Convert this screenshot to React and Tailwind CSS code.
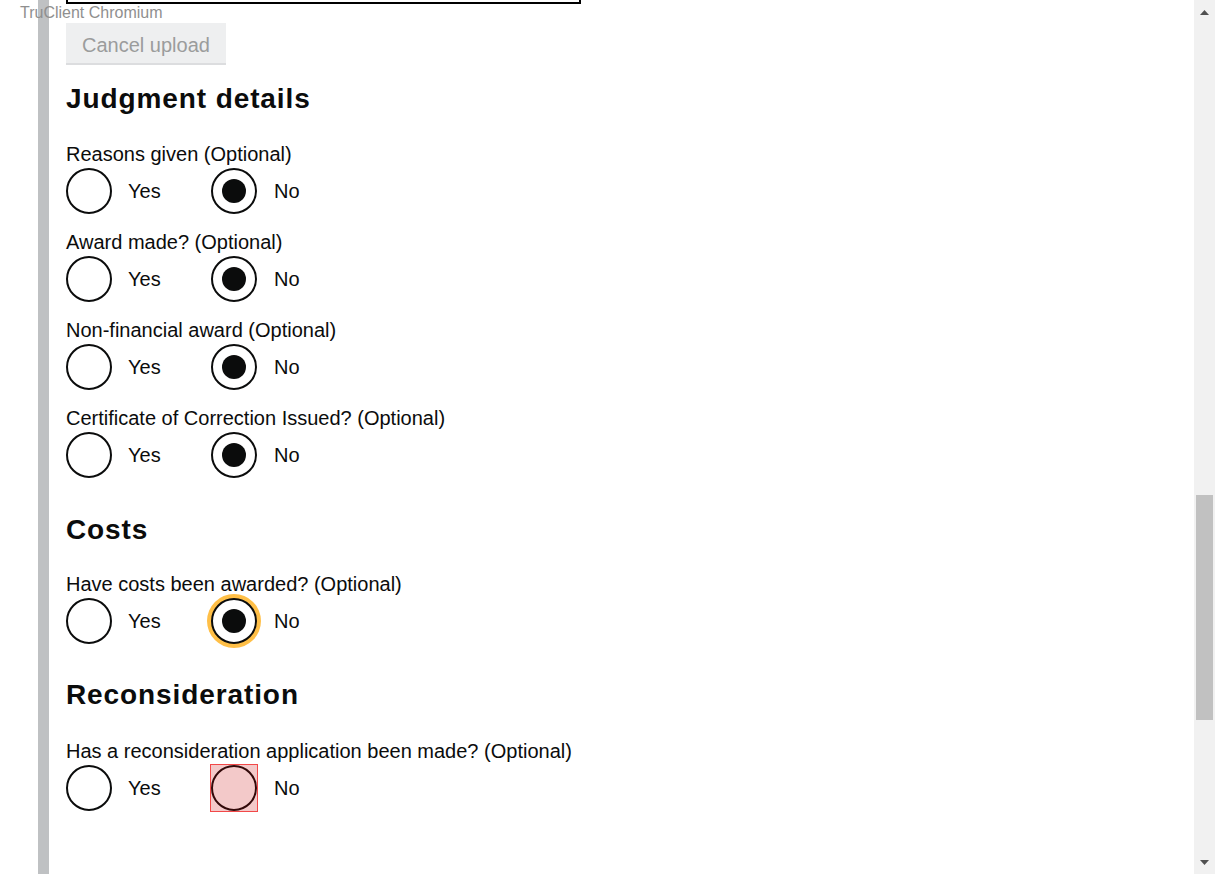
import React from "react";

const groups = [
  {
    heading: "Judgment details",
    gap: "mt-[20px] mb-[29px]",
    questions: [
      { label: "Reasons given (Optional)", selected: "no" },
      { label: "Award made? (Optional)", selected: "no" },
      { label: "Non-financial award (Optional)", selected: "no" },
      { label: "Certificate of Correction Issued? (Optional)", selected: "no" },
    ],
  },
  {
    heading: "Costs",
    gap: "mt-[18px] mb-[28px]",
    questions: [{ label: "Have costs been awarded? (Optional)", selected: "no", focused: true }],
  },
  {
    heading: "Reconsideration",
    gap: "mt-[17px] mb-[30px]",
    questions: [{ label: "Has a reconsideration application been made? (Optional)", flagged: true }],
  },
];

function Radio({ checked, focused, flagged }) {
  return (
    <span
      className={
        "relative flex h-[46px] w-[46px] shrink-0 items-center justify-center rounded-full border-2 border-[#0b0c0c] bg-white " +
        (focused ? "shadow-[0_0_0_4px_#ffbf47]" : "")
      }
    >
      {checked && <span className="h-6 w-6 rounded-full bg-[#0b0c0c]" />}
      {flagged && <span className="absolute -inset-[3px] border border-[#f24848] bg-[rgba(198,0,0,0.21)]" />}
    </span>
  );
}

function Question({ label, selected, focused, flagged }) {
  return (
    <div className="mb-[18px] flex flex-col">
      <p className="h-[24px] text-[20px] leading-[20px]">{label}</p>
      <div className="flex h-[46px] items-center">
        <div className="flex w-[145px] items-center gap-[16px]">
          <Radio checked={selected === "yes"} />
          <span className="text-[20px] leading-[24px]">Yes</span>
        </div>
        <div className="flex items-center gap-[17px]">
          <Radio checked={selected === "no"} focused={focused} flagged={flagged} />
          <span className="text-[20px] leading-[24px]">No</span>
        </div>
      </div>
    </div>
  );
}

function Scrollbar() {
  return (
    <div className="flex h-full w-[21px] shrink-0 flex-col bg-[#f1f1f1]">
      <div className="flex h-[24px] items-center justify-center">
        <svg width="9" height="5" viewBox="0 0 9 5">
          <polygon points="4.5,0 9,5 0,5" fill="#505050" />
        </svg>
      </div>
      <div className="flex-1">
        <div className="mx-[2px] mt-[471px] h-[225px] bg-[#c1c1c1]" />
      </div>
      <div className="flex h-[24px] items-center justify-center">
        <svg width="9" height="5" viewBox="0 0 9 5">
          <polygon points="0,0 9,0 4.5,5" fill="#505050" />
        </svg>
      </div>
    </div>
  );
}

export default function App() {
  return (
    <div className="relative flex h-[874px] w-full overflow-hidden bg-white font-['Liberation_Sans',Arial,sans-serif] text-[#0b0c0c]">
      <div className="flex min-w-0 flex-1 pl-[38px]">
        <div className="h-full w-[11px] shrink-0 bg-[#bfc1c3]" />
        <main className="flex flex-1 flex-col pl-[17px]">
          <div className="h-[4px] w-[515px] border-x-2 border-b-2 border-black" />
          <button
            disabled
            className="mt-[19px] h-[40px] self-start bg-[#eeeff0] px-[16px] pt-[10px] pb-[6px] text-[20px] leading-[24px] text-[#9b9c9c] shadow-[0_2px_0_#dcdddf]"
          >
            Cancel upload
          </button>

          {groups.map((group) => (
            <section key={group.heading} className="flex flex-col">
              <h2 className={"text-[28px] font-bold leading-[32px] tracking-[0.9px] " + group.gap}>{group.heading}</h2>
              {group.questions.map((q) => (
                <Question key={q.label} {...q} />
              ))}
            </section>
          ))}
        </main>
      </div>
      <Scrollbar />
      <span className="absolute left-[20px] top-[4px] text-[16px] leading-[18px] text-[#8f8f8f]">TruClient Chromium</span>
    </div>
  );
}
